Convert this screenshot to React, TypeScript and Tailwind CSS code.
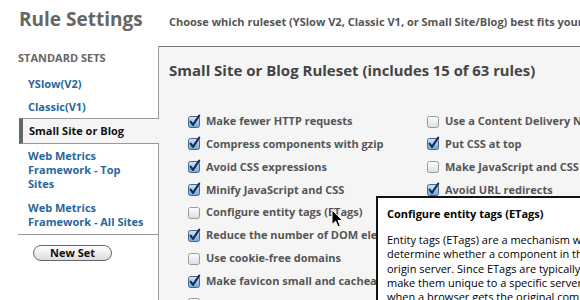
import React from "react";

function Box({ checked, id }: { checked: boolean; id: string }) {
  return (
    <svg width="13" height="13" viewBox="0 0 13 13" className="shrink-0 overflow-visible">
      <defs>
        <linearGradient id={id} x1="0" y1="0" x2="0" y2="1">
          {checked ? (
            <>
              <stop offset="0" stopColor="#d4e6fa" />
              <stop offset="1" stopColor="#6fa4de" />
            </>
          ) : (
            <>
              <stop offset="0" stopColor="#ffffff" />
              <stop offset="1" stopColor="#dcdcdc" />
            </>
          )}
        </linearGradient>
      </defs>
      <rect
        x="0.5"
        y="1.5"
        width="11"
        height="11"
        rx="2"
        fill={`url(#${id})`}
        stroke={checked ? "#4a6789" : "#9a9a9a"}
      />
      {checked && (
        <path d="M2.6 6.6 L5 9.8 L11.2 0.6" fill="none" stroke="#1a2c4c" strokeWidth="2.1" strokeLinecap="round" strokeLinejoin="round" />
      )}
    </svg>
  );
}

const col1: [boolean, string][] = [
  [true, "Make fewer HTTP requests"],
  [true, "Compress components with gzip"],
  [true, "Avoid CSS expressions"],
  [true, "Minify JavaScript and CSS"],
  [false, "Configure entity tags (ETags)"],
  [true, "Reduce the number of DOM elements"],
  [false, "Use cookie-free domains"],
  [true, "Make favicon small and cacheable"],
  [false, "Avoid empty src or href"],
];

const col2: [boolean, string][] = [
  [false, "Use a Content Delivery Network (CDN)"],
  [true, "Put CSS at top"],
  [false, "Make JavaScript and CSS external"],
  [true, "Avoid URL redirects"],
];

function Row({ c, label, id }: { c: boolean; label: string; id: string }) {
  return (
    <div className="flex items-center gap-[5px] h-[22.86px] whitespace-nowrap">
      <Box checked={c} id={id} />
      <span className="text-[11px] leading-[14px] font-bold text-[#555]">{label}</span>
    </div>
  );
}

export default function App() {
  return (
    <div className="relative w-[580px] h-[300px] overflow-hidden bg-white font-['Open_Sans',sans-serif]">
      {/* Header */}
      <div className="h-[46px] flex items-baseline pt-[7px] pl-[19px] whitespace-nowrap">
        <div className="w-[150px] shrink-0 text-[19px] leading-[24px] font-bold text-[#666]">Rule Settings</div>
        <div className="text-[11px] font-bold text-[#555]">
          Choose which ruleset (YSlow V2, Classic V1, or Small Site/Blog) best fits your site
        </div>
      </div>

      <div className="flex h-[254px]">
        {/* Sidebar */}
        <div className="w-[159px] shrink-0 pl-[18px] flex flex-col">
          <div className="border-r border-[#999] pt-[5px] h-[27px] text-[11px] leading-[14px] font-bold text-[#666]">
            STANDARD SETS
          </div>
          <div className="border-r border-[#999] h-[22px] pt-[4px] pl-[10px] text-[11px] leading-[14px] font-bold text-[#28679c]">
            YSlow(V2)
          </div>
          <div className="border-r border-[#999] h-[23px] pt-[5px] pl-[10px] text-[11px] leading-[14px] font-bold text-[#28679c]">
            Classic(V1)
          </div>
          <div className="ml-px h-[26px] border-y border-[#999] border-l-4 border-l-[#666] bg-[#f5f5f5] pt-[5px] pl-[6px] text-[11px] leading-[14px] font-bold text-[#111]">
            Small Site or Blog
          </div>
          <div className="border-r border-[#999] py-[5px] pl-[10px] text-[11px] leading-[14px] font-bold text-[#28679c]">
            Web Metrics
            <br />
            Framework - Top
            <br />
            Sites
          </div>
          <div className="border-r border-[#999] py-[5px] pl-[10px] text-[11px] leading-[14px] font-bold text-[#28679c]">
            Web Metrics
            <br />
            Framework - All Sites
          </div>
          <div className="flex-1 border-r border-[#999]">
            <div className="border-t border-[#999] pl-[15px] pt-[10px]">
              <button className="w-[79px] h-[16px] rounded-full border border-[#666] bg-gradient-to-b from-white to-[#dcdcdc] text-[11px] leading-[14px] font-bold text-[#111] flex items-center justify-center">
                New Set
              </button>
            </div>
          </div>
        </div>

        {/* Main panel */}
        <div className="flex-1 bg-[#f5f5f5] border-t border-[#777]">
          <div className="pl-[10px] pt-[13px] text-[15px] leading-[20px] font-bold text-[#444] whitespace-nowrap">
            Small Site or Blog Ruleset <span className="text-[14.8px]">(includes 15 of 63 rules)</span>
          </div>
          <div className="mt-[29.6px] grid grid-cols-[239px_1fr] pl-[29px]">
            <div className="flex flex-col">
              {col1.map(([c, l], i) => (
                <Row key={l} c={c} label={l} id={`a${i}`} />
              ))}
            </div>
            <div className="flex flex-col">
              {col2.map(([c, l], i) => (
                <Row key={l} c={c} label={l} id={`b${i}`} />
              ))}
            </div>
          </div>
        </div>
      </div>

      {/* Tooltip */}
      <div className="absolute left-[376px] top-[196px] w-[260px] h-[130px] bg-white border-2 border-[#111] pl-[9px] pt-[9px] whitespace-nowrap text-black">
        <div className="text-[11px] leading-[14px] font-bold">Configure entity tags (ETags)</div>
        <div className="mt-[12px] text-[11px] leading-[14.3px]">
          <div>Entity tags (ETags) are a mechanism with which web servers and browsers</div>
          <div>determine whether a component in the browser's cache matches one on the</div>
          <div>origin server. Since ETags are typically constructed using attributes that</div>
          <div>make them unique to a specific server hosting a site, the tags will not match</div>
          <div>when a browser gets the original component from one server and later tries to</div>
        </div>
      </div>

      {/* Cursor */}
      <svg className="absolute left-[331px] top-[209px]" width="13" height="20" viewBox="0 0 13 20">
        <path d="M1 1 L1 15.5 L4.6 12.2 L7 17.8 L9.3 16.8 L7 11.4 L11.6 11.4 Z" fill="#000" stroke="#fff" strokeWidth="1" strokeLinejoin="round" />
      </svg>
    </div>
  );
}
